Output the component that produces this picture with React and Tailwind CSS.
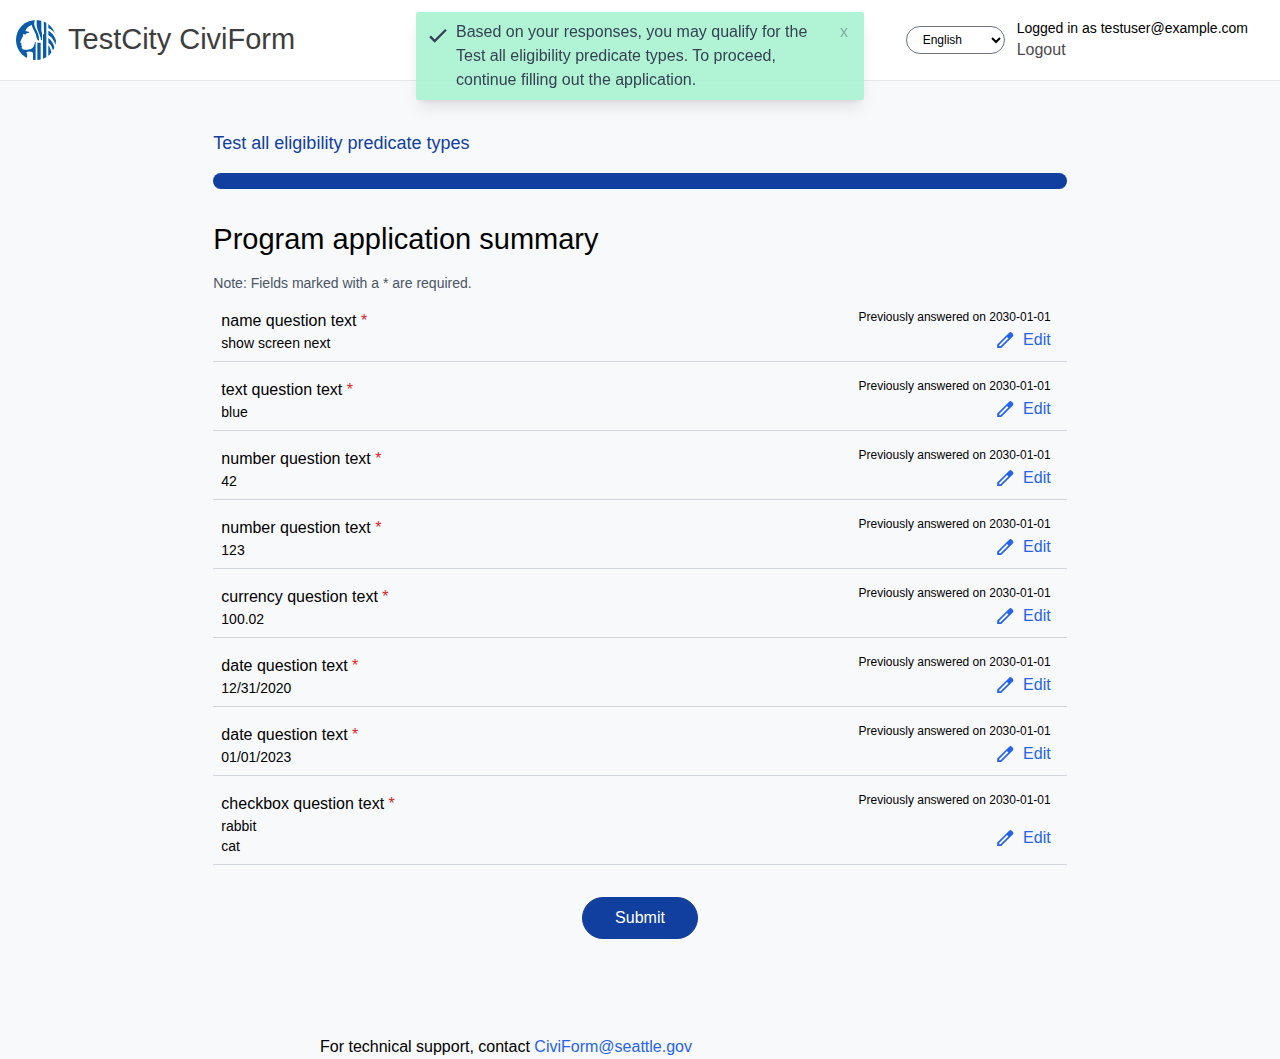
const answers = [
  { question: "name question text", lines: ["show screen next"] },
  { question: "text question text", lines: ["blue"] },
  { question: "number question text", lines: ["42"] },
  { question: "number question text", lines: ["123"] },
  { question: "currency question text", lines: ["100.02"] },
  { question: "date question text", lines: ["12/31/2020"] },
  { question: "date question text", lines: ["01/01/2023"] },
  { question: "checkbox question text", lines: ["rabbit", "cat"] },
];

function Logo() {
  return (
    <svg viewBox="0 0 120 120" className="h-10 w-10 shrink-0" role="img" aria-label="City logo">
      <defs>
        <clipPath id="disc">
          <circle cx="60" cy="60" r="60" />
        </clipPath>
      </defs>
      <g clipPath="url(#disc)" fill="#0a5cab">
        <path d="M0 0 H57 C53 8 54 16 58 24 C63 34 69 42 69 58 L69 62 C64 60 62 56 61 50 C60 38 50 28 47 14 C38 18 31 24 28 33 L38 35 L40 38 L32 40 L28 44 L22 41 L21 48 L14 62 L13 68 L17 71 L15 75 L18 78 L17 84 L20 88 L31 90 L45 87 C52 84 56 76 57 66 L59 66 L59 120 L51 120 L51 98 C44 94 36 94 31 97 C35 104 34 112 31 120 L0 120 Z" />
        <path d="M62 -2 H76 V26 C76 34 77 36 78 38 V60 H75 C75 46 62 28 62 14 Z" />
        <path d="M64 68 H74 V120 H64 Z" />
        <path d="M83 -2 H91 V120 H81 V42 C83 44 84 46 84 36 Z" />
        <path d="M97 8 C110 20 118 32 122 48 C114 34 106 28 97 25 Z" />
        <path d="M97 32 C108 38 116 48 122 66 L119 76 C112 58 106 50 97 46 Z" />
        <path d="M97 54 C106 60 112 70 116 84 L111 92 C108 80 104 72 97 68 Z" />
        <path d="M97 76 C102 82 105 90 106 98 L97 110 Z" />
      </g>
    </svg>
  );
}

function Toast() {
  return (
    <div
      role="alert"
      className="fixed left-1/2 top-3 z-10 flex w-md -translate-x-1/2 rounded-xs bg-[#a7f3d0]/90 px-2 py-2 text-gray-700 shadow-lg"
    >
      <svg viewBox="0 0 24 24" className="mt-1 mr-2 ml-1 h-6 w-5 shrink-0" aria-hidden="true">
        <path d="M2.500 12.500 L8 18 L21.500 4.500" fill="none" stroke="currentColor" strokeWidth="2.800" />
      </svg>
      <p className="grow">
        Based on your responses, you may qualify for the Test all eligibility predicate types. To proceed, continue
        filling out the application.
      </p>
      <button type="button" aria-label="Dismiss" className="ml-6 w-6 shrink-0 self-start text-center opacity-40">
        x
      </button>
    </div>
  );
}

function Header() {
  return (
    <header className="flex h-[81px] items-center border-b border-gray-200 bg-white px-4">
      <a href="#home" className="flex items-center gap-3 text-[29px] text-[#3d3d3d]">
        <Logo />
        TestCity CiviForm
      </a>
      <div className="ml-auto flex items-center gap-3 pr-4">
        <select
          aria-label="Language"
          defaultValue="English"
          className="h-7 w-[99px] rounded-full border border-gray-500 bg-white px-3 text-xs text-black"
        >
          <option>English</option>
        </select>
        <div className="flex flex-col items-start">
          <span className="text-sm">Logged in as testuser@example.com</span>
          <a href="#logout" className="text-base text-[#4a4a4a]">
            Logout
          </a>
        </div>
      </div>
    </header>
  );
}

function AnswerRow({ question, lines }) {
  return (
    <li className="flex justify-between border-b border-gray-300 pt-4 pr-4 pb-2 pl-2">
      <div>
        <h2 className="text-base">
          {question} <span className="text-[#dc2626]">*</span>
        </h2>
        {lines.map((line) => (
          <p key={line} className="text-sm">
            {line}
          </p>
        ))}
      </div>
      <div className="grid justify-items-end">
        <p className="text-xs">Previously answered on 2030-01-01</p>
        <a href="#edit" className="flex items-center gap-2 self-center text-[#2563eb]">
          <svg viewBox="0 0 20 20" className="h-5 w-5" fill="currentColor" aria-hidden="true">
            <path
              d="M14.200 2.800 a1.800 1.800 0 0 1 2.600 0 l1 1 a1.800 1.800 0 0 1 0 2.600 L6.200 18 H2.200 V14.400 Z M12 7 L4.200 14.900 V16.200 H5.500 L13.400 8.400 Z"
              fillRule="evenodd"
            />
          </svg>
          Edit
        </a>
      </div>
    </li>
  );
}

export default function App() {
  return (
    <div className="min-h-screen bg-[#f8f9fb] font-['Liberation_Sans',sans-serif] text-base text-black">
      <Toast />
      <Header />
      <main className="mx-auto w-2/3 pt-12">
        <p className="text-lg text-[#113f9f]">Test all eligibility predicate types</p>
        <div
          role="progressbar"
          aria-label="Application progress"
          aria-valuenow={100}
          className="mt-4 h-4 rounded-full bg-[#113f9f]"
        />
        <h1 className="mt-8 text-[29px] leading-9">Program application summary</h1>
        <p className="mt-4 text-sm text-gray-600">Note: Fields marked with a * are required.</p>
        <ul>
          {answers.map((answer, index) => (
            <AnswerRow key={index} {...answer} />
          ))}
        </ul>
        <div className="mt-8 flex justify-center">
          <button
            type="button"
            className="rounded-full border border-[#113f9f] bg-[#113f9f] px-8 py-2 text-white"
          >
            Submit
          </button>
        </div>
      </main>
      <footer className="mx-auto w-1/2 pt-24">
        For technical support, contact{" "}
        <a href="mailto:CiviForm@seattle.gov" className="text-[#2563eb]">
          CiviForm@seattle.gov
        </a>
      </footer>
    </div>
  );
}
